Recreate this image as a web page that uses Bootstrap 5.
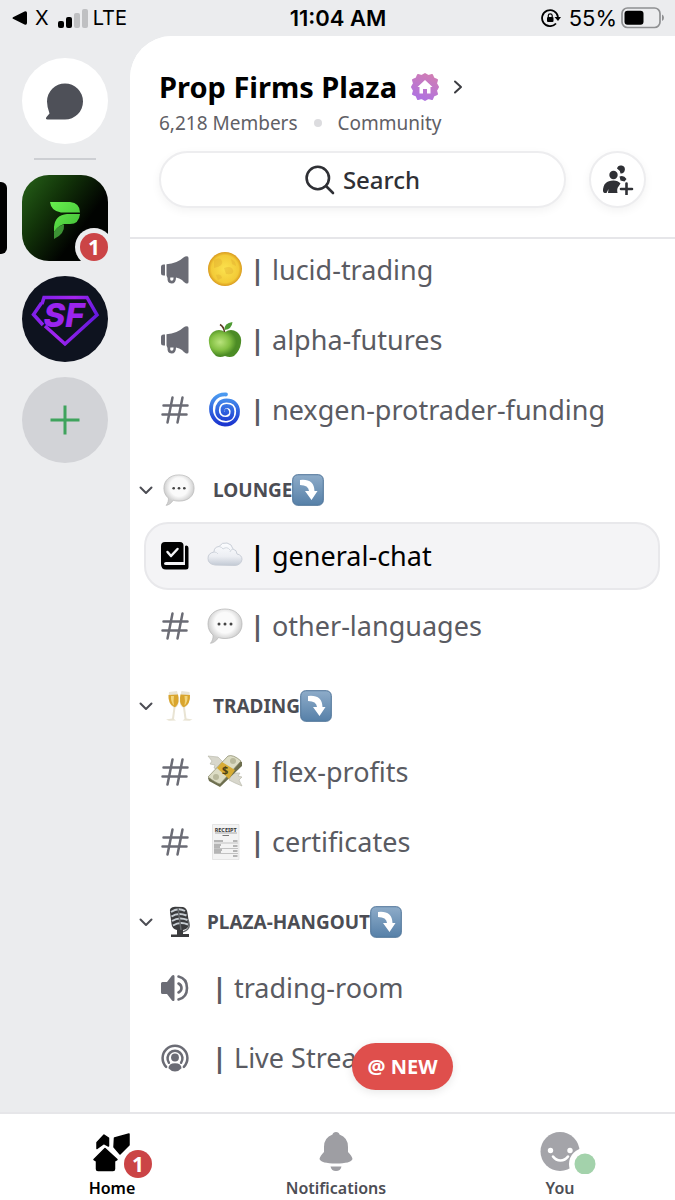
<!DOCTYPE html>
<html lang="en">
<head>
<meta charset="utf-8">
<meta name="viewport" content="width=device-width, initial-scale=1">
<title>Prop Firms Plaza</title>
<link href="https://cdn.jsdelivr.net/npm/bootstrap@5.3.0/dist/css/bootstrap.min.css" rel="stylesheet">
<style>
  body { background: #ebecee; color: #000; font-family: "Noto Sans", sans-serif; }
  a { color: inherit; text-decoration: none; }
  svg { display: block; flex: none; }
  .statusbar { height: 36px; font: 20px/36px Inter, sans-serif; padding: 0 11px 0 12px; }
  .statusbar > div { flex: 1 1 0; }
  .clock, .power { font-size: 22px; }
  .clock { font-weight: 600; }
  .rail { width: 130px; padding-top: 22px; flex: none; }
  .server { width: 86px; height: 86px; margin-bottom: 15px; flex: none; }
  .server svg { width: 86px; height: 86px; }
  .rail hr { width: 62px; margin: 0 0 15px; border-top: 2px solid #cdcfd3; opacity: 1; }
  .server.dm { margin-bottom: 14px; background: #fff; }
  .marker { left: 0; top: 7px; width: 7px; height: 72px; border-radius: 0 6px 6px 0; background: #000; }
  .count { width: 28px; height: 28px; background: #cb4446; color: #fff; font-weight: 700; font-size: 21px; line-height: 28px; }
  .server .count { right: 0; bottom: 0; box-shadow: 0 0 0 5px #ebecee; }
  .panel { background: #fff; border-top-left-radius: 42px; min-width: 0; overflow: hidden; }
  .panel-head { padding: 31px 29px 29px; border-bottom: 2px solid #e6e6e9; }
  .server-line { gap: 13px; }
  .server-name { font-size: 29px; line-height: 40px; font-weight: 700; margin: 0; }
  .server-meta { font-size: 19px; line-height: 28px; color: #5f6066; margin: 2px 0 14px; gap: 16px; }
  .head-tools { gap: 23px; }
  .meta-dot { width: 8px; height: 8px; background: #dcdcdf; }
  .pill { height: 57px; border: 2px solid #ededef; background: #fff; border-radius: 29px; box-shadow: 0 3px 10px rgba(0,0,0,.05); color: #2f3035; font-size: 24px; font-weight: 500; }
  .pill-round { width: 57px; }
  .channels { margin-top: -4px; padding: 0 15px 18px 14px; }
  .channel { height: 68px; margin: 1px 0; padding-left: 16px; border: 1px solid transparent; border-radius: 24px; font-size: 27px; color: #5a5b62; white-space: nowrap; }
  .channel.active { background: #f4f4f6; border: 2px solid #e8e8eb; padding-left: 15px; color: #000; }
  .channel .kind { width: 28px; height: 28px; margin-right: 16px; }
  .kind { color: #6b6c75; }
  .active .kind { color: #000; }
  .emoji { width: 38px; padding-left: 2px; }
  .emoji svg { width: 36px; height: 36px; }
  .bar { width: 29px; text-align: center; font-weight: 700; }
  .category { height: 76px; padding: 14px 0 0; border: 0; background: none; font-size: 19px; font-weight: 700; color: #4c4d54; }
  .category .chev { margin: 0 10px 0 -5px; }
  .category .lead-emoji { width: 32px; height: 32px; margin-right: 18px; }
  .new-pill { left: 50%; bottom: 22px; transform: translateX(-50%); height: 47px; padding: 0 16px; border: 0; border-radius: 24px; background: #df4f4c; color: #fff; font-size: 20px; font-weight: 700; box-shadow: 0 2px 10px rgba(0,0,0,.1); white-space: nowrap; }
  .tabbar { background: #fff; border-top: 2px solid #e6e6e9; height: 88px; padding: 16px 3px 0 0; font-size: 16px; line-height: 24px; font-weight: 600; color: #4d4e55; }
  .tabbar a { flex: 1 1 0; }
  .tabbar .glyph { width: 42px; height: 46px; }
  .tabbar .count { left: 33px; top: 20px; }
</style>
</head>
<body>
<svg width="0" height="0" class="position-absolute" aria-hidden="true">
  <defs>
    <linearGradient id="gArrow" x2="0" y2="1"><stop stop-color="#8eacc9"/><stop offset="1" stop-color="#5680a8"/></linearGradient>
    <radialGradient id="gBubble" cy=".4"><stop offset=".6" stop-color="#fafafa"/><stop offset="1" stop-color="#cfcfcf"/></radialGradient>
  </defs>
  <symbol id="megaphone" viewBox="0 0 28 28"><path fill="currentColor" fill-rule="evenodd" d="M0 11Q0 8.500 2.500 8.500H4V19.500H2.500Q0 19.500 0 17ZM5.500 8.300Q16 7.500 22.500 1.500 24 .3 26 .3 27.500.5 27.500 2V26Q27.500 27.800 25.500 27.500 24 27.300 21 24 18.500 22 15 21.500 15 27.500 10.500 27.500 6 27.300 6.500 22L5.500 19.500ZM9.300 21.500Q8.800 24.800 10.700 24.800T12.500 21.500Z"/></symbol>
  <symbol id="hash" viewBox="0 0 28 28"><path fill="none" stroke="currentColor" stroke-width="2.500" stroke-linecap="round" d="M11.500 1.500 6.500 26.500M21.500 1.500 16.500 26.500M2.500 9.500H26.500M1.500 18.500H25.500"/></symbol>
  <symbol id="rules" viewBox="0 0 28 28"><path fill="currentColor" d="M4 0H19Q22.500 0 22.500 3.500V20H5Q3 20 3 21.500 3 23 5 23H24V4.500Q24 3.500 25.500 3.500 27.500 3.500 27.500 6V25Q27.500 27.500 25 27.500H5Q0 27.500 0 22V4Q0 0 4 0Z"/><path fill="none" stroke="#f4f4f6" stroke-width="2.500" stroke-linecap="round" stroke-linejoin="round" d="M6.500 10 10 14 16.500 7"/></symbol>
  <symbol id="speaker" viewBox="0 0 28 28"><path fill="currentColor" d="M1.500 8H6L11 1.500Q13.500 0 13.500 2.500V25.500Q13.500 28 11 26.500L6 20H1.500Q0 20 0 18.500V9.500Q0 8 1.500 8Z"/><path fill="none" stroke="currentColor" stroke-width="2.600" stroke-linecap="round" d="M17.500 9.500Q20.500 11 20.500 14T17.500 18.500M17.500 2.500Q26 4.500 26 14T17.500 25.500"/></symbol>
  <symbol id="stage" viewBox="0 0 30 30"><g fill="none" stroke="currentColor" stroke-width="2.700" stroke-linecap="round"><path d="M5.500 24.500A13.300 13.300 0 1 1 24.500 24.500"/><path d="M8.500 20A8 8 0 1 1 21.500 20"/></g><circle cx="15" cy="14.500" r="4.200" fill="currentColor"/><path fill="currentColor" d="M8 26Q8 20.500 15 20.500T22 26Q19 29.500 15 29.500T8 26Z"/></symbol>
  <symbol id="chevron" viewBox="0 0 14 14"><path fill="none" stroke="#4c4d54" stroke-width="2" stroke-linecap="round" stroke-linejoin="round" d="M1.500 4.500 7 10 12.500 4.500"/></symbol>
  <symbol id="arrow" viewBox="0 0 32 32"><rect x=".7" y=".7" width="30.600" height="30.600" rx="5" fill="url(#gArrow)" stroke="#4e7398"/><path fill="#fff" d="M8 6Q22 4.500 22.500 17H25.500L19.500 26 13 17H17Q16.500 11 8 11Z"/></symbol>
  <symbol id="bubble" viewBox="0 0 36 36"><path fill="url(#gBubble)" stroke="#b9b9b9" stroke-width=".8" d="M18 1C28 1 35 7 35 16S28 30.500 18 30.500C15 30.500 13 30 11.500 29.500 9.500 33 6 35 3.500 35.300 5.500 33 6.500 29.500 6 27 3 24.500 1 21 1 16 1 7 8 1 18 1Z"/><g fill="#444"><circle cx="12" cy="16" r="1.500"/><circle cx="18" cy="16" r="1.500"/><circle cx="24" cy="16" r="1.500"/></g></symbol>
</svg>

<div class="d-flex flex-column min-vh-100">
  <header class="statusbar d-flex align-items-center">
    <div class="d-flex align-items-center">
      <svg width="15" height="14" viewBox="0 0 15 14"><path d="M1 6.200 12.500.5Q15-.3 15 2V12Q15 14.300 12.500 13.500L1 7.800Q0 7 1 6.200Z"/></svg>
      <span class="ms-2 me-2">X</span>
      <svg width="32" height="20" viewBox="0 0 32 20"><rect x="1" y="13" width="6" height="7" rx="2"/><rect x="9" y="9" width="6" height="11" rx="2"/><g fill="#bfc0c2"><rect x="17" y="5" width="6" height="15" rx="2"/><rect x="25" y="1" width="6" height="19" rx="2"/></g></svg>
      <span class="ms-1">LTE</span>
    </div>
    <span class="clock">11:04 AM</span>
    <div class="power d-flex align-items-center justify-content-end">
      <svg width="20" height="18" viewBox="0 0 20 18"><path fill="none" stroke="#000" stroke-width="1.800" d="M15 14.500A8 8 0 1 1 17 8"/><path d="M13.500 8H20L17 12Z"/><rect x="6" y="8" width="6.500" height="5" rx="1"/><path fill="none" stroke="#000" stroke-width="1.200" d="M7.300 8V6.500Q7.300 4.800 9.200 4.800T11.200 6.500V8"/></svg>
      <span class="ms-2 me-1">55%</span>
      <svg width="43" height="22" viewBox="0 0 43 22"><rect x="1" y="1" width="38" height="19.500" rx="5.500" fill="none" stroke="#8f9092" stroke-width="1.700"/><rect x="3.500" y="3.700" width="19" height="14" rx="3"/><path fill="#8f9092" d="M41 7.500Q43 8.500 43 10.700T41 14Z"/></svg>
    </div>
  </header>

  <main class="d-flex flex-grow-1">
    <nav class="rail d-flex flex-column align-items-center" aria-label="Servers">
      <a href="#" class="server dm rounded-circle" aria-label="Direct messages">
        <svg viewBox="0 0 86 86"><path fill="#4e5058" d="M43 25.500A18 18 0 1 1 43 61.500H25.500Q23 61 24.500 59L27.500 55.500Q25 49 25 43.500A18 18 0 0 1 43 25.500Z"/></svg>
      </a>
      <hr>
      <div class="position-relative w-100 d-flex justify-content-center">
        <span class="marker position-absolute"></span>
        <a href="#" class="server position-relative" aria-label="Prop Firms Plaza">
          <svg viewBox="0 0 86 86"><defs><linearGradient id="gPlaza" x2=".75" y2=".55"><stop stop-color="#276319"/><stop offset=".5" stop-color="#123409"/><stop offset="1" stop-color="#010301"/></linearGradient><linearGradient id="gMark" x2="1" y2="1"><stop stop-color="#67f04e"/><stop offset="1" stop-color="#42bd37"/></linearGradient></defs>
            <rect width="86" height="86" rx="27" fill="url(#gPlaza)"/><path fill="url(#gMark)" d="M28 27H48Q58 28 58 37.500H39Q29 36 28 27ZM58 39Q57 49 48 49H42Q36 51 32 57V52Q33 40 45 39Z"/><path fill="#3c9234" d="M42 49.500Q43 59 32 64V57Q35 51 42 49.500Z"/></svg>
          <span class="count position-absolute rounded-circle text-center">1</span>
        </a>
      </div>
      <a href="#" class="server" aria-label="SF">
        <svg viewBox="0 0 86 86"><defs><linearGradient id="gSf" x2="1" y2=".3"><stop stop-color="#7a1fe8"/><stop offset=".6" stop-color="#a425f0"/><stop offset="1" stop-color="#6719df"/></linearGradient></defs>
          <circle cx="43" cy="43" r="43" fill="#0e131f"/><path fill="none" stroke="url(#gSf)" stroke-width="3.500" d="M20 28 22 21.500H65L75 39 43 68 23 50M19.500 27 11.500 38.500 21 49"/><text x="42" y="51" text-anchor="middle" font-family="Inter, sans-serif" font-weight="800" font-style="italic" font-size="33" fill="#9a24ee">SF</text></svg>
      </a>
      <a href="#" class="server" aria-label="Add a server">
        <svg viewBox="0 0 86 86"><circle cx="43" cy="43" r="43" fill="#d2d3d7"/><path stroke="#3fa35d" stroke-width="3" d="M28.500 43H57.500M43 28.500V57.500"/></svg>
      </a>
    </nav>

    <section class="panel flex-grow-1 position-relative">
      <div class="panel-head position-relative bg-white">
        <div class="server-line d-flex align-items-center">
          <h1 class="server-name">Prop Firms Plaza</h1>
          <svg width="30" height="30" viewBox="0 0 30 30"><defs><linearGradient id="gBadge" x1=".7" x2=".3" y2="1"><stop stop-color="#d07db4"/><stop offset="1" stop-color="#ae72e2"/></linearGradient></defs><path fill="url(#gBadge)" stroke="url(#gBadge)" stroke-width="2" stroke-linejoin="round" d="M15 2 18.500 4 22 3 23.500 6.500 27 8 26 11.500 28 15 26 18.500 27 22 23.500 23.500 22 27 18.500 26 15 28 11.500 26 8 27 6.500 23.500 3 22 4 18.500 2 15 4 11.500 3 8 6.500 6.500 8 3 11.500 4Z"/><path fill="#fff" d="M15 8 22.500 15H20.500V21.500H17V17H13V21.500H9.500V15H7.500Z"/></svg>
          <svg width="10" height="16" viewBox="0 0 10 16"><path fill="none" stroke="#3c3d42" stroke-width="2" stroke-linecap="round" stroke-linejoin="round" d="M2 2.500 8 8 2 13.500"/></svg>
        </div>
        <div class="server-meta d-flex align-items-center"><span>6,218 Members</span><span class="meta-dot rounded-circle"></span><span>Community</span></div>
        <div class="head-tools d-flex">
          <button type="button" class="pill flex-grow-1 d-flex align-items-center justify-content-center gap-2">
            <svg width="30" height="30" viewBox="0 0 30 30"><path fill="none" stroke="#2f3035" stroke-width="2.600" stroke-linecap="round" d="M24 13A11.200 11.200 0 1 1 1.600 13 11.200 11.200 0 1 1 24 13ZM21 21 28 28"/></svg>
            <span>Search</span>
          </button>
          <button type="button" class="pill pill-round p-0 d-flex align-items-center justify-content-center" aria-label="Invite people">
            <svg width="32" height="30" viewBox="0 0 32 30"><g fill="#2f3035"><circle cx="11.500" cy="10" r="4.200"/><path d="M1 26Q1 15.500 11.500 15.500 16 15.500 18.500 18.500L16.500 21.500Q14.500 23.500 15.500 28H6L6.500 24 4.500 28H2.500Q1 27.500 1 26Z"/><path d="M15 3.500A4 4 0 1 1 18.500 8.500 7 7 0 0 0 15 3.500ZM17.500 11.500Q22 10 24.500 14L22.500 16.500 18.500 15.500Z"/><path d="M24.500 18.500V29.500M19 24H30" stroke="#2f3035" stroke-width="2.600" stroke-linecap="round"/></g></svg>
          </button>
        </div>
      </div>

      <div class="channels d-flex flex-column">
        <a href="#" class="channel d-flex align-items-center"><svg class="kind"><use href="#megaphone"/></svg>
          <span class="emoji"><svg viewBox="0 0 36 36"><defs><radialGradient id="gMoon"><stop stop-color="#fbe24e"/><stop offset=".8" stop-color="#f3cb38"/><stop offset="1" stop-color="#d99a1e"/></radialGradient></defs><circle cx="18" cy="17" r="17" fill="url(#gMoon)"/><path fill="#dda72e" opacity=".35" d="M7 8Q13 4 15 9T7 16ZM17 16Q24 13 26 18T19 22ZM24 7Q29 9 29 14L25 12ZM9 23Q14 21 15 26L11 28Z"/></svg></span><span class="bar">|</span><span>lucid-trading</span></a>
        <a href="#" class="channel d-flex align-items-center"><svg class="kind"><use href="#megaphone"/></svg>
          <span class="emoji"><svg viewBox="0 0 36 36"><defs><radialGradient id="gApple" cx=".35" cy=".45"><stop stop-color="#b9e37c"/><stop offset=".6" stop-color="#83c043"/><stop offset="1" stop-color="#4c8c25"/></radialGradient></defs><path fill="url(#gApple)" d="M18 10Q24 6 30 10 35 14 34 21 33 29 27 34 23 36 18 34 13 36 9 34 3 29 2 21 1 14 6 10 12 6 18 10Z"/><path fill="none" stroke="#5b3a24" stroke-width="1.500" d="M17.500 10Q17 5 13 2.500"/><path fill="#4e9a33" d="M17.500 8Q17 1 25.500 0 25 7 17.500 8Z"/></svg></span><span class="bar">|</span><span>alpha-futures</span></a>
        <a href="#" class="channel d-flex align-items-center"><svg class="kind"><use href="#hash"/></svg>
          <span class="emoji"><svg viewBox="0 0 36 36"><defs><linearGradient id="gSpin" x2="0" y2="1"><stop stop-color="#4b9af0"/><stop offset="1" stop-color="#1b35cf"/></linearGradient></defs><path fill="none" stroke="url(#gSpin)" stroke-width="3.800" stroke-linecap="round" d="M19 2.500C9 2 4 9 4 17S10 32.500 18 32.500 31 27 31 19.500 26 8.500 19.500 8.500 10 13 10 18.500 14 27 19 27 25.500 23.500 25.500 19.500 23 14 19.500 14 15.500 16 15.500 18.500 17 22 19 21.500 20.500 19.500 19.500 18.500"/></svg></span><span class="bar">|</span><span>nexgen-protrader-funding</span></a>

        <button type="button" class="category d-flex align-items-center"><svg class="chev" width="14" height="14"><use href="#chevron"/></svg><svg class="lead-emoji"><use href="#bubble"/></svg><span>LOUNGE</span><svg width="32" height="32"><use href="#arrow"/></svg></button>
        <a href="#" class="channel active d-flex align-items-center"><svg class="kind"><use href="#rules"/></svg>
          <span class="emoji"><svg viewBox="0 0 36 36"><defs><linearGradient id="gCloud" x2="0" y2="1"><stop stop-color="#fcfdff"/><stop offset=".6" stop-color="#eceef3"/><stop offset="1" stop-color="#c2c9d4"/></linearGradient></defs><path fill="url(#gCloud)" stroke="#c9ced7" d="M8 27Q1 26 1 20.500 1 15 7 14 7 9 12 8.500 15 4 20 5 25 6 26 11 30 12 30 16 35 17 35 21.500 34 27 28 27.500Z"/><path fill="none" stroke="#d4d9e0" d="M7 14Q10 14 11 16M12 8.500Q15 9 16 11 20 8 23 12M26 11Q23 12 23 14"/></svg></span><span class="bar">|</span><span>general-chat</span></a>
        <a href="#" class="channel d-flex align-items-center"><svg class="kind"><use href="#hash"/></svg>
          <span class="emoji"><svg><use href="#bubble"/></svg></span><span class="bar">|</span><span>other-languages</span></a>

        <button type="button" class="category d-flex align-items-center"><svg class="chev" width="14" height="14"><use href="#chevron"/></svg>
          <svg class="lead-emoji" viewBox="0 0 32 32"><g id="flute"><path fill="#e9e4d4" d="M6 2 14 1Q18 13 13.500 17L12.500 17.500 11 29 13 30.500 6 30.800 3 29.500 9 28.500 10.500 17.500Q4 13 6 2Z"/><path fill="#d9a52e" d="M5.500 5 15 4.500Q16.800 13 13 16.500L11.500 17.300Q5 14 5.500 5Z"/><path fill="#f3d579" d="M8 6H11Q10 12 11 15.500 7.500 12 8 6Z"/></g><use href="#flute" transform="matrix(-1 0 0 1 32.500 0)"/></svg><span>TRADING</span><svg width="32" height="32"><use href="#arrow"/></svg></button>
        <a href="#" class="channel d-flex align-items-center"><svg class="kind"><use href="#hash"/></svg>
          <span class="emoji"><svg viewBox="0 0 36 36"><path fill="#d8d7cc" stroke="#b4b3a5" stroke-width=".6" d="M1 2 11 3 17 9 12 16 7 14 8 11 3 10 5 7ZM25 19 33 19 31 22 35 23 32 26 35 32 28 29 22 26Z"/><path fill="#6d6e4e" d="M1 24 24 3 35 8V12L13 33 2 27Z"/><path fill="#dcdcc4" stroke="#88886a" stroke-width=".7" d="M1 23 21 2Q26 0 34 7L13 30Q9 29 1 23Z"/><path fill="#d7ac35" d="M10 14 15 8 28 16 22 25Z"/><circle cx="26" cy="7" r="3" fill="#b9b99c"/><circle cx="9" cy="23" r="3" fill="#b9b99c"/><text x="15" y="20" font-size="11" font-weight="700" fill="#4e4215">$</text></svg></span><span class="bar">|</span><span>flex-profits</span></a>
        <a href="#" class="channel d-flex align-items-center"><svg class="kind"><use href="#hash"/></svg>
          <span class="emoji"><svg viewBox="0 0 36 36"><path fill="#f3f3f3" stroke="#ddd" stroke-width=".7" d="M5.500.5H32V35.500H5.500Z"/><text x="18.700" y="7.500" text-anchor="middle" font-size="5.500" font-weight="700" fill="#333">RECEIPT</text><g stroke="#777"><path d="M8 9H30" stroke-width=".6"/><path d="M15.500 11.500H22M7 17H16M26 17H30.500M7 21H14M26 22H30.500M7 23H13M7 26H15M26 27H30.500M7 28H14M26 32H30.500"/><path stroke-width=".4" d="M7 19H31M7 24.500H31M7 29.500H31"/></g></svg></span><span class="bar">|</span><span>certificates</span></a>

        <button type="button" class="category d-flex align-items-center"><svg class="chev" width="14" height="14"><use href="#chevron"/></svg>
          <svg class="lead-emoji me-2" viewBox="0 0 32 32"><path fill="#3a3b3d" d="M7 6Q6 1 12 .8L20 1Q24 2 24.500 7L26 17Q26 23 20 24H14Q9 23 8.500 18Z"/><path fill="none" stroke="#c7cdd2" stroke-width="2" d="M8 6Q15 1 22 5M8.500 10.500Q15 6 23.500 9.500M9 15Q16 10.500 24.500 14M10 19.500Q17 15 25 18.500"/><path fill="none" stroke="#66696c" stroke-width="1.500" d="M15 2 18 24M25 14Q29 24 19 26"/><path fill="#3a3b3d" d="M14 24H20V28H26V31H8V28.500H14Z"/></svg><span class="ms-1">PLAZA-HANGOUT</span><svg width="32" height="32"><use href="#arrow"/></svg></button>
        <a href="#" class="channel d-flex align-items-center"><svg class="kind"><use href="#speaker"/></svg><span class="bar">|</span><span>trading-room</span></a>
        <a href="#" class="channel d-flex align-items-center"><svg class="kind"><use href="#stage"/></svg><span class="bar">|</span><span>Live Stream</span></a>
      </div>
      <button type="button" class="new-pill position-absolute">@ NEW</button>
    </section>
  </main>

  <nav class="tabbar d-flex text-center" aria-label="Main">
    <a href="#" class="d-flex flex-column align-items-center text-black">
      <span class="glyph position-relative"><svg width="42" height="44" viewBox="0 0 42 44"><path stroke="#000" stroke-width="1.500" stroke-linejoin="round" d="M6 12.500 13 5 17.500 8V16L13 13.500 6 18.500ZM23.500 8 38 4V15L29 24 23 17ZM3 29.500 14 18.500 26 29.500 23.500 31V39Q23.500 40.500 22 40.500H7Q5.500 40.500 5.500 39V31Z"/></svg><span class="count position-absolute rounded-circle">1</span></span>
      <span>Home</span>
    </a>
    <a href="#" class="d-flex flex-column align-items-center">
      <span class="glyph"><svg width="42" height="44" viewBox="0 0 42 44"><path fill="#9e9ea3" d="M21 2Q24 2 24.500 4.500 33 7.500 33 17V22Q37 26 37.500 29 36 33.500 21 33.500T4.500 29Q5 26 9 22V17Q9 7.500 17.500 4.500 18 2 21 2ZM15.500 36.500H26.500Q25.500 41 21 41T15.500 36.500Z"/></svg></span>
      <span>Notifications</span>
    </a>
    <a href="#" class="d-flex flex-column align-items-center">
      <span class="glyph"><svg width="62" height="44" viewBox="0 0 62 44"><circle cx="21" cy="21.500" r="19.500" fill="#a4a4a9"/><g fill="#fff"><circle cx="11.500" cy="20.500" r="2.700"/><circle cx="31" cy="20.500" r="2.700"/></g><path fill="none" stroke="#fff" stroke-width="2.600" stroke-linecap="round" d="M14 26.500Q17 30.500 21.500 30.500T29 26.500"/><circle cx="46" cy="34" r="16" fill="#fff"/><circle cx="46" cy="34" r="10.500" fill="#a3d2ab"/></svg></span>
      <span>You</span>
    </a>
  </nav>
</div>
<script src="https://cdn.jsdelivr.net/npm/bootstrap@5.3.0/dist/js/bootstrap.bundle.min.js"></script>
</body>
</html>
